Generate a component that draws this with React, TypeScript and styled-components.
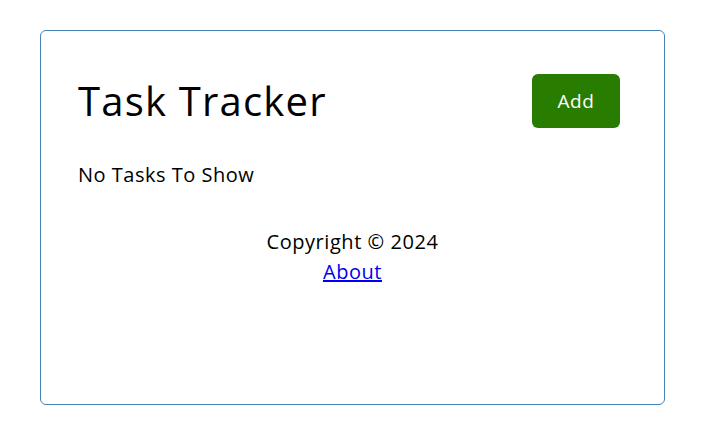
import React from "react";
import styled, { createGlobalStyle } from "styled-components";

const Global = createGlobalStyle`
  html, body { margin: 0; padding: 0; background: #fff; }
  body { font-family: "Open Sans", "Liberation Sans", sans-serif; color: #000; }
`;

const Container = styled.div`
  box-sizing: border-box;
  width: 625px;
  min-height: 375px;
  margin: 30px 0 0 40px;
  padding: 37px;
  border: 1px solid #4682b4;
  border-radius: 6px;
`;

const Header = styled.header`
  display: flex;
  justify-content: space-between;
  align-items: center;
  height: 66px;
  margin-bottom: 26px;
`;

const Title = styled.h1`
  margin: 0;
  font-size: 40px;
  font-weight: 500;
  line-height: 1;
  letter-spacing: 1.2px;
`;

const Button = styled.button`
  margin: 6px 7px 6px 6px;
  width: 88px;
  height: 54px;
  border: none;
  border-radius: 6px;
  background: #287d00;
  color: #fff;
  font-family: inherit;
  font-size: 19px;
  font-weight: 500;
  letter-spacing: 0.5px;
  cursor: pointer;
`;

const Text = styled.p`
  margin: 0;
  font-size: 20px;
  line-height: 30px;
  letter-spacing: 0.5px;
`;

const Footer = styled.footer`
  margin-top: 37px;
  text-align: center;
  font-size: 20px;
  line-height: 30px;
  letter-spacing: 0.55px;
`;

const Link = styled.a`
  color: #0000ee;
`;

export default function App() {
  return (
    <>
      <Global />
      <Container>
        <Header>
          <Title>Task Tracker</Title>
          <Button>Add</Button>
        </Header>
        <Text>No Tasks To Show</Text>
        <Footer>
          <div>Copyright &copy; 2024</div>
          <Link href="#">About</Link>
        </Footer>
      </Container>
    </>
  );
}
